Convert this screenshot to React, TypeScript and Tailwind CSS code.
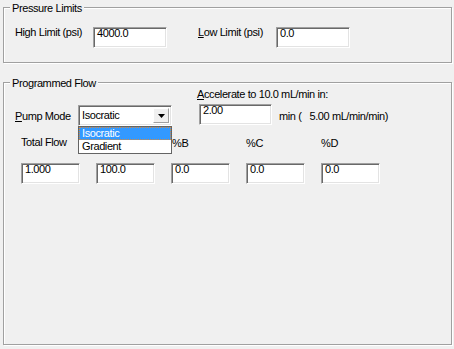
import React from 'react';

const sunken =
  'bg-white border border-t-[#a0a0a0] border-l-[#a0a0a0] border-b-white border-r-white shadow-[inset_1px_1px_0_#696969,inset_-1px_-1px_0_#e3e3e3]';

const etched = 'relative border border-[#a0a0a0] shadow-[inset_1px_1px_0_#fff,1px_1px_0_#fff]';

function Field({ value, className }: { value: string; className: string }) {
  return (
    <div className={`${sunken} ${className} pl-[3px] pt-[1px] leading-[9px] text-black`}>
      {value}
    </div>
  );
}

function GroupBox({ title, className, children }: { title: string; className: string; children: React.ReactNode }) {
  return (
    <div className={`${etched} ${className}`}>
      <span className="absolute left-[6px] top-[-5px] px-[2px] bg-[#f0f0f0] leading-[11px]">{title}</span>
      {children}
    </div>
  );
}

export default function App() {
  return (
    <div className="w-[454px] h-[349px] overflow-hidden bg-[#f0f0f0] pt-[7px] pl-[3px] font-['Liberation_Sans',Arial,sans-serif] text-[11px] tracking-[-0.4px] text-black">
      <GroupBox title="Pressure Limits" className="w-[449px] h-[56px]">
        <div className="flex items-start pl-[11px] mt-[19px]">
          <span className="w-[78px] leading-[11px]">
            Hi<span className="underline">g</span>h Limit (psi)
          </span>
          <Field value="4000.0" className="w-[74px] h-[21px]" />
          <span className="ml-[31px] w-[78px] leading-[11px]">
            <span className="underline">L</span>ow Limit (psi)
          </span>
          <Field value="0.0" className="w-[74px] h-[21px]" />
        </div>
      </GroupBox>

      <GroupBox title="Programmed Flow" className="mt-[19px] w-[449px] h-[263px]">
        <div className="flex h-[37px] pl-[11px] mt-[6px]">
          <div className="flex items-start mt-[16px]">
            <span className="w-[63px] mt-[6px] leading-[11px]">
              <span className="underline">P</span>ump Mode
            </span>
            <div className="relative">
              <div className={`${sunken} relative w-[94px] h-[21px] pl-[3px] flex items-center leading-[13px]`}>
                Isocratic
                <div className="absolute right-[2px] top-[2px] w-[16px] h-[15px] bg-[#f0f0f0] border border-t-white border-l-white border-b-[#a0a0a0] border-r-[#a0a0a0] flex items-center justify-center">
                  <svg width="7" height="4" viewBox="0 0 7 4">
                    <path d="M0 0H7L3.5 4Z" fill="#000" />
                  </svg>
                </div>
              </div>
              {/* open list, drawn over the %A column */}
              <div className="absolute left-0 top-full z-10 w-[94px] bg-white border border-[#646464]">
                <div className="h-[13px] leading-[13px] bg-[#3399ff] text-white pl-[3px] outline outline-1 outline-dotted outline-[#d98a3c] -outline-offset-1">
                  Isocratic
                </div>
                <div className="h-[13px] leading-[13px] pl-[3px]">Gradient</div>
              </div>
            </div>
          </div>
          <div className="ml-[25px] flex flex-col">
            <span className="leading-[11px]">
              <span className="underline">A</span>ccelerate to 10.0 mL/min in:
            </span>
            <div className="flex items-start mt-[4px]">
              <Field value="2.00" className="ml-[2px] w-[73px] h-[21px]" />
              <span className="ml-[7px] mt-[7px] leading-[11px] whitespace-pre">min (   5.00 mL/min/min)</span>
            </div>
          </div>
        </div>

        <div className="grid grid-cols-[75px_75px_75px_75px_75px] pl-[17px] mt-[11px]">
          <span className="leading-[11px]">Total Flow</span>
          <span className="leading-[11px]" />
          <span className="leading-[11px] pt-[1px] pl-[1px]">%B</span>
          <span className="leading-[11px] pt-[1px]">%C</span>
          <span className="leading-[11px] pt-[1px]">%D</span>
          <Field value="1.000" className="mt-[14px] w-[59px] h-[21px]" />
          <Field value="100.0" className="mt-[14px] w-[59px] h-[21px]" />
          <Field value="0.0" className="mt-[14px] w-[59px] h-[21px]" />
          <Field value="0.0" className="mt-[14px] w-[59px] h-[21px]" />
          <Field value="0.0" className="mt-[14px] w-[59px] h-[21px]" />
        </div>
      </GroupBox>
    </div>
  );
}
